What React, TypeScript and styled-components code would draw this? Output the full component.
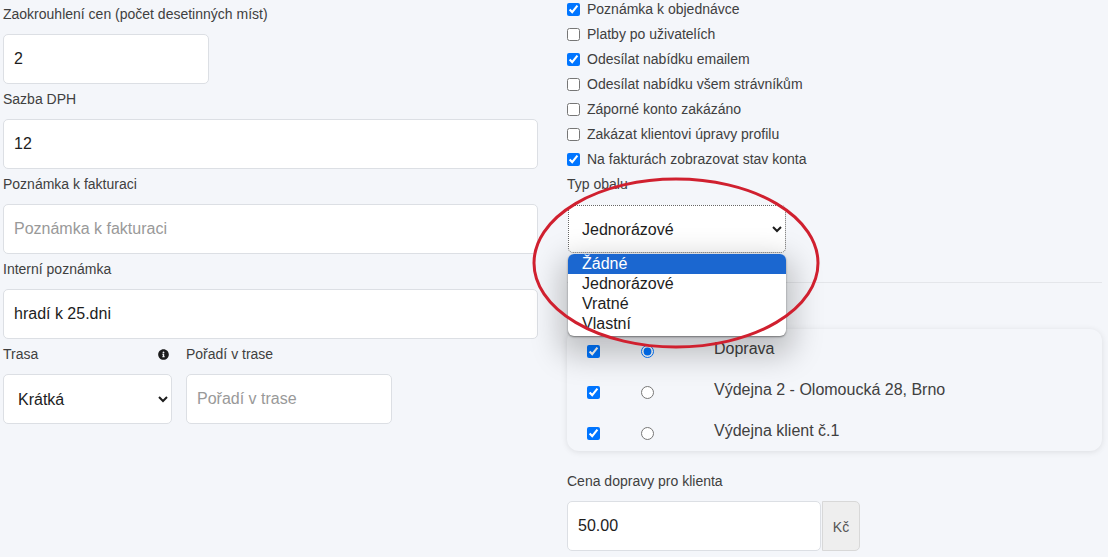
import React from "react";
import styled, { createGlobalStyle } from "styled-components";
import { FaInfoCircle } from "react-icons/fa";

const Global = createGlobalStyle`
  html, body { margin: 0; padding: 0; height: 557px; overflow: hidden; background: #f4f6fa; }
  body { font-family: "Liberation Sans", Arial, sans-serif; color: #3c3c3c; }
`;

const Page = styled.div`
  display: flex;
  gap: 29px;
  padding-left: 3px;
  height: 557px;
  overflow: hidden;
`;
const Column = styled.div`
  width: 535px;
  display: flex;
  flex-direction: column;
  position: relative;
`;
const Label = styled.label<{ $first?: boolean }>`
  display: block;
  font-size: 14px;
  line-height: 20px;
  margin: ${(p) => (p.$first ? "4px" : "5px")} 0 10px;
  color: #404040;
`;
const LabelRow = styled.div`
  display: flex;
  justify-content: space-between;
  align-items: center;
  svg { font-size: 11px; color: #1c1c1c; margin: -5px 3px 0 0; }
`;
const Input = styled.input<{ $width?: number }>`
  box-sizing: border-box;
  display: block;
  width: ${(p) => (p.$width ? `${p.$width}px` : "100%")};
  height: 50px;
  padding: 0 10px;
  font: 16px "Liberation Sans", Arial, sans-serif;
  color: #1d1d1d;
  background: #fff;
  border: 1px solid #dcdfe4;
  border-radius: 5px;
  outline: none;
  &::placeholder { color: #999; opacity: 1; }
`;
const Select = styled.select<{ $width: number; $focus?: boolean }>`
  box-sizing: border-box;
  display: block;
  width: ${(p) => p.$width}px;
  height: ${(p) => (p.$focus ? 48 : 50)}px;
  padding: 0 ${(p) => (p.$focus ? 9 : 10)}px;
  margin-left: ${(p) => (p.$focus ? 1 : 0)}px;
  font: 16px "Liberation Sans", Arial, sans-serif;
  color: #1d1d1d;
  background: #fff;
  border: 1px ${(p) => (p.$focus ? "dotted #666" : "solid #dcdfe4")};
  border-radius: 5px;
  outline: none;
`;
const Split = styled.div`
  display: flex;
  gap: 14px;
`;
const SplitCell = styled.div<{ $width: number }>`
  width: ${(p) => p.$width}px;
`;
const Checks = styled.div`
  display: flex;
  flex-direction: column;
  gap: 7px;
`;
const CheckRow = styled.label`
  display: flex;
  align-items: center;
  gap: 7px;
  height: 18px;
  font-size: 14px;
  color: #404040;
  input { width: 13px; height: 13px; margin: 0; }
`;
const TypeLabel = styled(Label)`
  margin: 6px 0 11px;
`;
const Divider = styled.hr`
  border: 0;
  border-top: 1px solid #e4e6ea;
  margin: 29px 0 46px;
`;
const Card = styled.div`
  box-sizing: border-box;
  height: 122px;
  padding-top: 2px;
  border-radius: 12px;
  background: #f4f6fa;
  box-shadow: 0 1px 6px rgba(0, 0, 0, 0.1);
`;
const CardRow = styled.div`
  height: 41px;
  display: grid;
  grid-template-columns: 54px 73px 1fr;
  padding-left: 20px;
  align-items: center;
  font-size: 16px;
  color: #404040;
  input { width: 13px; height: 13px; margin: 0; }
  span { margin-top: -6px; }
`;
const PriceLabel = styled(Label)`
  margin-top: 20px;
`;
const InputGroup = styled.div`
  display: flex;
  gap: 1px;
`;
const Addon = styled.div`
  box-sizing: border-box;
  width: 38px;
  height: 50px;
  display: flex;
  align-items: center;
  justify-content: center;
  padding-top: 2px;
  font-size: 14px;
  color: #555;
  background: #eee;
  border: 1px solid #d8d8d8;
  border-radius: 0 5px 5px 0;
`;
const Menu = styled.div`
  position: absolute;
  left: 1px;
  top: 254px;
  width: 218px;
  height: 82px;
  box-sizing: border-box;
  background: #fff;
  border-radius: 6px;
  overflow: hidden;
  box-shadow: 0 1px 2px rgba(0, 0, 0, 0.45), 0 12px 30px 8px rgba(0, 0, 0, 0.22);
`;
const MenuItem = styled.div<{ $active?: boolean }>`
  height: 20px;
  line-height: 19px;
  padding-left: 14px;
  font-size: 16px;
  color: ${(p) => (p.$active ? "#fff" : "#1d1d1d")};
  background: ${(p) => (p.$active ? "#1b67d0" : "transparent")};
`;
const Circle = styled.svg`
  position: absolute;
  left: -40px;
  top: 172px;
  pointer-events: none;
`;

const checks: [string, boolean][] = [
  ["Poznámka k objednávce", true],
  ["Platby po uživatelích", false],
  ["Odesílat nabídku emailem", true],
  ["Odesílat nabídku všem strávníkům", false],
  ["Záporné konto zakázáno", false],
  ["Zakázat klientovi úpravy profilu", false],
  ["Na fakturách zobrazovat stav konta", true],
];
const places: [string, boolean][] = [
  ["Doprava", true],
  ["Výdejna 2 - Olomoucká 28, Brno", false],
  ["Výdejna klient č.1", false],
];

export default function App() {
  return (
    <Page>
      <Global />
      <Column>
        <Label $first>Zaokrouhlení cen (počet desetinných míst)</Label>
        <Input $width={206} defaultValue="2" />
        <Label>Sazba DPH</Label>
        <Input defaultValue="12" />
        <Label>Poznámka k fakturaci</Label>
        <Input placeholder="Poznámka k fakturaci" />
        <Label>Interní poznámka</Label>
        <Input defaultValue="hradí k 25.dni" />
        <Split>
          <SplitCell $width={169}>
            <LabelRow>
              <Label>Trasa</Label>
              <FaInfoCircle />
            </LabelRow>
            <Select $width={169} defaultValue="k">
              <option value="k">Krátká</option>
            </Select>
          </SplitCell>
          <SplitCell $width={206}>
            <Label>Pořadí v trase</Label>
            <Input placeholder="Pořadí v trase" />
          </SplitCell>
        </Split>
      </Column>
      <Column>
        <Checks>
          {checks.map(([t, c]) => (
            <CheckRow key={t}>
              <input type="checkbox" defaultChecked={c} />
              {t}
            </CheckRow>
          ))}
        </Checks>
        <TypeLabel>Typ obalu</TypeLabel>
        <Select $width={218} $focus defaultValue="j">
          <option value="j">Jednorázové</option>
        </Select>
        <Divider />
        <Card>
          {places.map(([t, c]) => (
            <CardRow key={t}>
              <input type="checkbox" defaultChecked />
              <input type="radio" name="place" defaultChecked={c} />
              <span>{t}</span>
            </CardRow>
          ))}
        </Card>
        <PriceLabel>Cena dopravy pro klienta</PriceLabel>
        <InputGroup>
          <Input $width={254} defaultValue="50.00" />
          <Addon>Kč</Addon>
        </InputGroup>
        <Menu>
          <MenuItem $active>Žádné</MenuItem>
          <MenuItem>Jednorázové</MenuItem>
          <MenuItem>Vratné</MenuItem>
          <MenuItem>Vlastní</MenuItem>
        </Menu>
        <Circle width="300" height="185" viewBox="0 0 300 185">
          <ellipse cx="149" cy="91" rx="142" ry="84" fill="none" stroke="#d0202f" strokeWidth="3" />
        </Circle>
      </Column>
    </Page>
  );
}
